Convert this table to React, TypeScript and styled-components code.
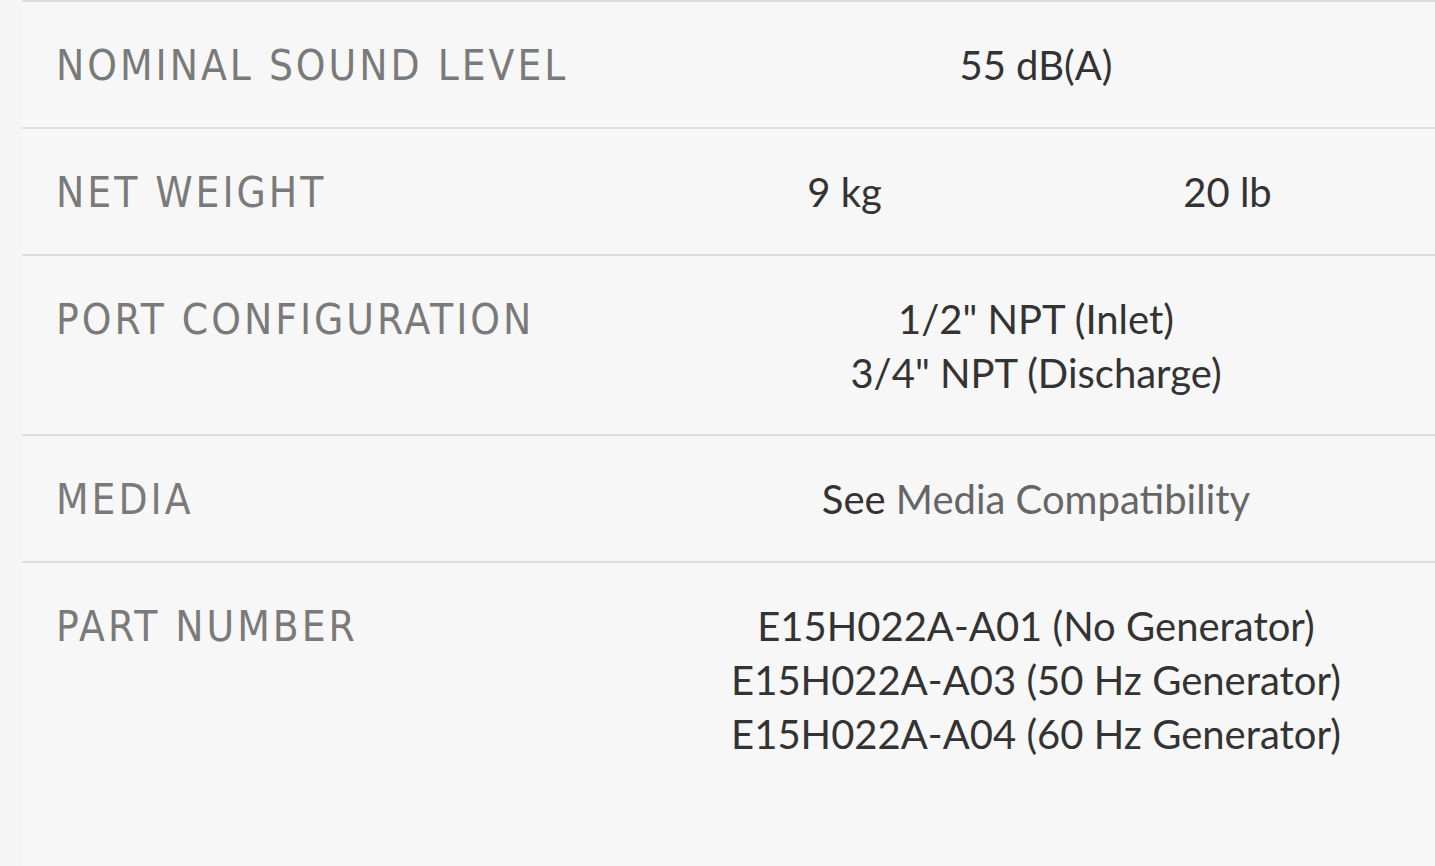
import styled, { createGlobalStyle } from "styled-components";

const GlobalStyle = createGlobalStyle`
  html, body {
    margin: 0;
    padding: 0;
    background: #f5f5f5;
    overflow: hidden;
  }
`;

const Page = styled.main`
  padding: 0 0 0 22px;
  width: 1460px;
`;

const SpecTable = styled.section`
  background: #f7f7f7;
  min-height: 900px;
`;

const SpecRow = styled.div`
  display: grid;
  grid-template-columns: 597px 766px 1fr;
  align-items: baseline;
  padding: 36px 0 34px 34px;
  border-top: 2px solid #dedede;
`;

const Label = styled.div`
  font-family: "DejaVu Sans", sans-serif;
  font-stretch: condensed;
  font-size: 42px;
  line-height: 54px;
  letter-spacing: 3px;
  text-transform: uppercase;
  color: #7a7a7a;
`;

const Value = styled.div<{ $split?: boolean }>`
  display: ${(p) => (p.$split ? "grid" : "block")};
  grid-template-columns: 1fr 1fr;
  font-family: Lato, "Open Sans", sans-serif;
  font-size: 40px;
  line-height: 54px;
  color: #333;
  text-align: center;
`;

const Link = styled.span`
  color: #666;
`;

type Spec = {
  label: string;
  values: string[];
  split?: boolean;
};

const specs: Spec[] = [
  { label: "Nominal Sound Level", values: ["55 dB(A)"] },
  { label: "Net Weight", values: ["9 kg", "20 lb"], split: true },
  {
    label: "Port Configuration",
    values: ['1/2" NPT (Inlet)', '3/4" NPT (Discharge)'],
  },
  { label: "Media", values: [] },
  {
    label: "Part Number",
    values: [
      "E15H022A-A01 (No Generator)",
      "E15H022A-A03 (50 Hz Generator)",
      "E15H022A-A04 (60 Hz Generator)",
    ],
  },
];

export default function App() {
  return (
    <>
      <GlobalStyle />
      <Page>
        <SpecTable>
          {specs.map((spec) => (
            <SpecRow key={spec.label}>
              <Label>{spec.label}</Label>
              {spec.label === "Media" ? (
                <Value>
                  See <Link>Media Compatibility</Link>
                </Value>
              ) : (
                <Value $split={spec.split}>
                  {spec.values.map((v) => (
                    <div key={v}>{v}</div>
                  ))}
                </Value>
              )}
            </SpecRow>
          ))}
        </SpecTable>
      </Page>
    </>
  );
}
